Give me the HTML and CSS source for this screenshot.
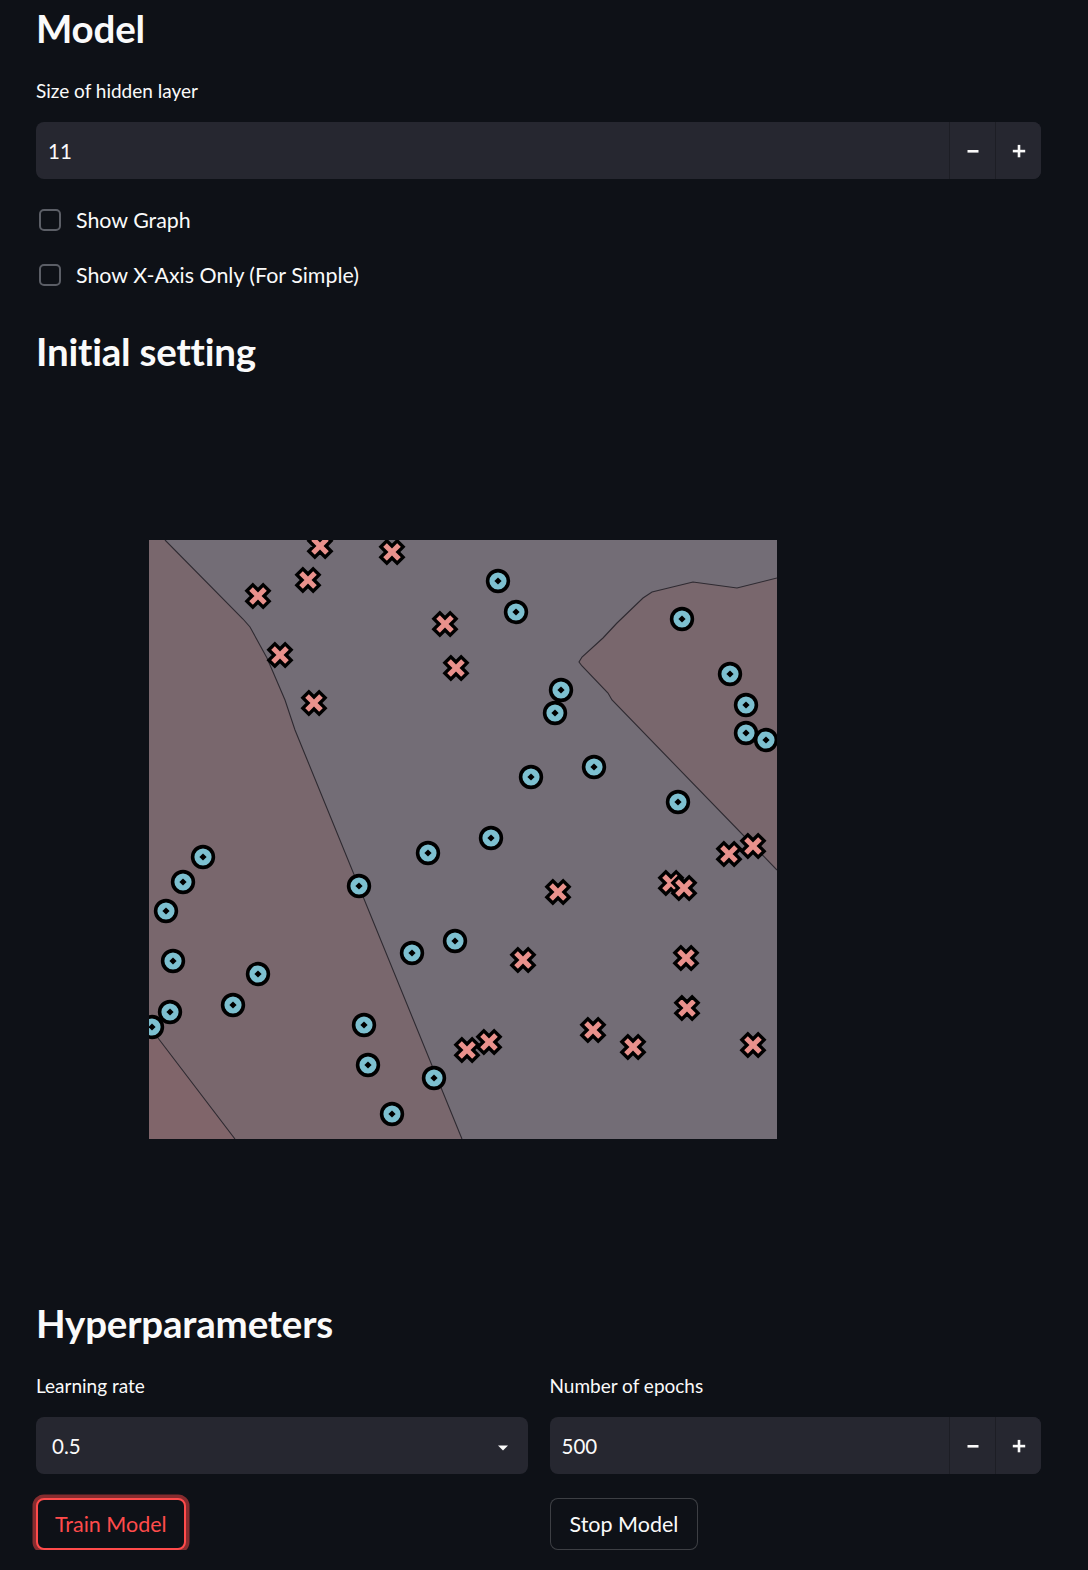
FILE: index.html
```html
<!DOCTYPE html>
<html lang="en">
<head>
<meta charset="utf-8">
<title>Model</title>
<link rel="stylesheet" href="styles.css">
</head>
<body>
<main class="page">
  <h2 class="heading heading-first">Model</h2>

  <div class="field">
    <label class="label">Size of hidden layer</label>
    <div class="number-input">
      <div class="number-value">11</div>
      <button class="step-btn" aria-label="minus">
        <svg width="14" height="14" viewBox="0 0 14 14"><rect x="1.5" y="6" width="11" height="2.6" fill="#fafafa"/></svg>
      </button>
      <button class="step-btn" aria-label="plus">
        <svg width="14" height="14" viewBox="0 0 14 14"><rect x="0.8" y="5.8" width="12.4" height="2.6" fill="#fafafa"/><rect x="5.7" y="0.9" width="2.6" height="12.4" fill="#fafafa"/></svg>
      </button>
    </div>
  </div>

  <div class="checks">
    <label class="check-row"><span class="check-box"></span><span class="check-text">Show Graph</span></label>
    <label class="check-row"><span class="check-box"></span><span class="check-text">Show X-Axis Only (For Simple)</span></label>
  </div>

  <h2 class="heading heading-second">Initial setting</h2>

  <div class="figure">
    <svg class="plot" width="628" height="599" viewBox="149 540 628 599">
      <defs>
        <g id="mo">
          <circle r="10.4" fill="#7dc0d0" stroke="#000" stroke-width="3.6"/>
          <polygon points="0,-3.6 3.6,0 0,3.6 -3.6,0" fill="#000"/>
        </g>
        <g id="mx">
          <polygon transform="rotate(45)" points="-4.2,-11.5 4.2,-11.5 4.2,-4.2 11.5,-4.2 11.5,4.2 4.2,4.2 4.2,11.5 -4.2,11.5 -4.2,4.2 -11.5,4.2 -11.5,-4.2 -4.2,-4.2" fill="#e9918c" stroke="#000" stroke-width="3.4" stroke-linejoin="miter"/>
        </g>
      </defs>
      <rect x="149" y="540" width="628" height="599" fill="#736d76"/>
      <polygon points="149,540 165,540 243,619 250,627 267,658 285,700 295,730 462,1139 149,1139" fill="#79676d"/>
      <polygon points="149,1026 158,1038 235,1139 149,1139" fill="#80656a"/>
      <polygon points="777,578 737,588 693,582 652,592 643,598 617,623 603,638 582,657 579,662 582,666 608,693 612,700 777,870" fill="#79676d"/>
      <g fill="none" stroke="#2e2a31" stroke-width="1.1">
        <polyline points="165,540 243,619 250,627 267,658 285,700 295,730 462,1139"/>
        <polyline points="149,1026 158,1038 235,1139"/>
        <polyline points="777,578 737,588 693,582 652,592 643,598 617,623 603,638 582,657 579,662 582,666 608,693 612,700 777,870"/>
      </g>
      <g>
        <use href="#mo" x="498" y="581"/>
        <use href="#mo" x="516" y="612"/>
        <use href="#mo" x="682" y="619"/>
        <use href="#mo" x="730" y="674"/>
        <use href="#mo" x="746" y="705"/>
        <use href="#mo" x="746" y="733"/>
        <use href="#mo" x="766" y="740"/>
        <use href="#mo" x="561" y="690"/>
        <use href="#mo" x="555" y="713"/>
        <use href="#mo" x="531" y="777"/>
        <use href="#mo" x="594" y="767"/>
        <use href="#mo" x="678" y="802"/>
        <use href="#mo" x="491" y="838"/>
        <use href="#mo" x="428" y="853"/>
        <use href="#mo" x="203" y="857"/>
        <use href="#mo" x="183" y="882"/>
        <use href="#mo" x="166" y="911"/>
        <use href="#mo" x="359" y="886"/>
        <use href="#mo" x="455" y="941"/>
        <use href="#mo" x="412" y="953"/>
        <use href="#mo" x="173" y="961"/>
        <use href="#mo" x="258" y="974"/>
        <use href="#mo" x="233" y="1005"/>
        <use href="#mo" x="170" y="1012"/>
        <use href="#mo" x="152" y="1027"/>
        <use href="#mo" x="364" y="1025"/>
        <use href="#mo" x="368" y="1065"/>
        <use href="#mo" x="434" y="1078"/>
        <use href="#mo" x="392" y="1114"/>
      </g>
      <g>
        <use href="#mx" x="320" y="546"/>
        <use href="#mx" x="392" y="552"/>
        <use href="#mx" x="258" y="596"/>
        <use href="#mx" x="308" y="580"/>
        <use href="#mx" x="445" y="624"/>
        <use href="#mx" x="456" y="668"/>
        <use href="#mx" x="280" y="655"/>
        <use href="#mx" x="314" y="703"/>
        <use href="#mx" x="753" y="846"/>
        <use href="#mx" x="729" y="854"/>
        <use href="#mx" x="558" y="892"/>
        <use href="#mx" x="671" y="883"/>
        <use href="#mx" x="684" y="888"/>
        <use href="#mx" x="523" y="960"/>
        <use href="#mx" x="686" y="958"/>
        <use href="#mx" x="687" y="1008"/>
        <use href="#mx" x="593" y="1030"/>
        <use href="#mx" x="633" y="1047"/>
        <use href="#mx" x="489" y="1042"/>
        <use href="#mx" x="467" y="1050"/>
        <use href="#mx" x="753" y="1045"/>
      </g>
    </svg>
  </div>

  <h2 class="heading heading-third">Hyperparameters</h2>

  <div class="columns">
    <div class="column">
      <label class="label">Learning rate</label>
      <div class="select">
        <span class="select-value">0.5</span>
        <svg class="caret" width="12" height="8" viewBox="0 0 12 8"><polygon points="1,1.5 11,1.5 6,6.5" fill="#fafafa"/></svg>
      </div>
      <button class="btn btn-primary">Train Model</button>
    </div>
    <div class="column">
      <label class="label">Number of epochs</label>
      <div class="number-input">
        <div class="number-value">500</div>
        <button class="step-btn" aria-label="minus">
          <svg width="14" height="14" viewBox="0 0 14 14"><rect x="1.5" y="6" width="11" height="2.6" fill="#fafafa"/></svg>
        </button>
        <button class="step-btn" aria-label="plus">
          <svg width="14" height="14" viewBox="0 0 14 14"><rect x="0.8" y="5.8" width="12.4" height="2.6" fill="#fafafa"/><rect x="5.7" y="0.9" width="2.6" height="12.4" fill="#fafafa"/></svg>
        </button>
      </div>
      <button class="btn btn-secondary">Stop Model</button>
    </div>
  </div>
</main>
</body>
</html>
```

FILE: styles.css
```css
* { box-sizing: border-box; }

html, body {
  margin: 0;
  padding: 0;
  background: #0e1117;
}

body {
  font-family: Lato, "Noto Sans", sans-serif;
  color: #fafafa;
}

.page {
  width: 1088px;
  padding: 4px 47px 0 36px;
}

.heading {
  margin: 0;
  font-size: 38.5px;
  line-height: 48px;
  font-weight: 700;
  letter-spacing: -0.2px;
  color: #fafafa;
}

.heading-second { margin-top: 38px; }
.heading-third { margin-top: 0; }

.field { margin-top: 27px; }

.label {
  display: block;
  font-size: 19px;
  line-height: 24px;
  height: 24px;
}

.number-input {
  margin-top: 19px;
  height: 57px;
  display: flex;
  background: #262730;
  border-radius: 8px;
  overflow: hidden;
}

.number-value {
  flex: 1;
  display: flex;
  align-items: center;
  padding-left: 12px;
  font-size: 20.5px;
}

.step-btn {
  width: 46px;
  border: 0;
  border-left: 1px solid #1d1e25;
  background: #262730;
  padding: 0;
  display: flex;
  align-items: center;
  justify-content: center;
}

.step-btn svg { display: block; }

.checks {
  margin-top: 27px;
  display: flex;
  flex-direction: column;
  gap: 27px;
}

.check-row {
  display: flex;
  align-items: center;
  height: 28px;
  padding-left: 3px;
}

.check-box {
  width: 22px;
  height: 22px;
  border: 2px solid #5b5e66;
  border-radius: 5px;
  background: #0e1117;
  flex: none;
}

.check-text {
  margin-left: 15px;
  font-size: 21.4px;
  line-height: 28px;
}

.figure {
  padding: 165px 0 160px 113px;
}

.plot { display: block; }

.columns {
  margin-top: 27px;
  display: flex;
  gap: 22px;
}

.column {
  flex: 1;
  display: flex;
  flex-direction: column;
  align-items: flex-start;
}

.column .number-input,
.column .select { width: 100%; }

.select {
  margin-top: 19px;
  height: 57px;
  background: #262730;
  border-radius: 8px;
  display: flex;
  align-items: center;
  justify-content: space-between;
  padding: 0 19px 0 16px;
  font-size: 20.5px;
}

.caret { display: block; margin-top: 4px; }

.btn {
  margin-top: 24px;
  height: 52px;
  padding: 0 19px;
  border-radius: 8px;
  background: #0e1117;
  font-family: Lato, "Noto Sans", sans-serif;
  font-size: 21.5px;
  cursor: pointer;
}

.btn-primary {
  color: #ff4b4b;
  border: 2px solid #ff4b4b;
  padding: 0 17px;
  box-shadow: 0 0 0 3.5px rgba(200, 60, 60, 0.65);
}

.btn-secondary {
  color: #fafafa;
  border: 1.5px solid rgba(250, 250, 250, 0.2);
}
```
